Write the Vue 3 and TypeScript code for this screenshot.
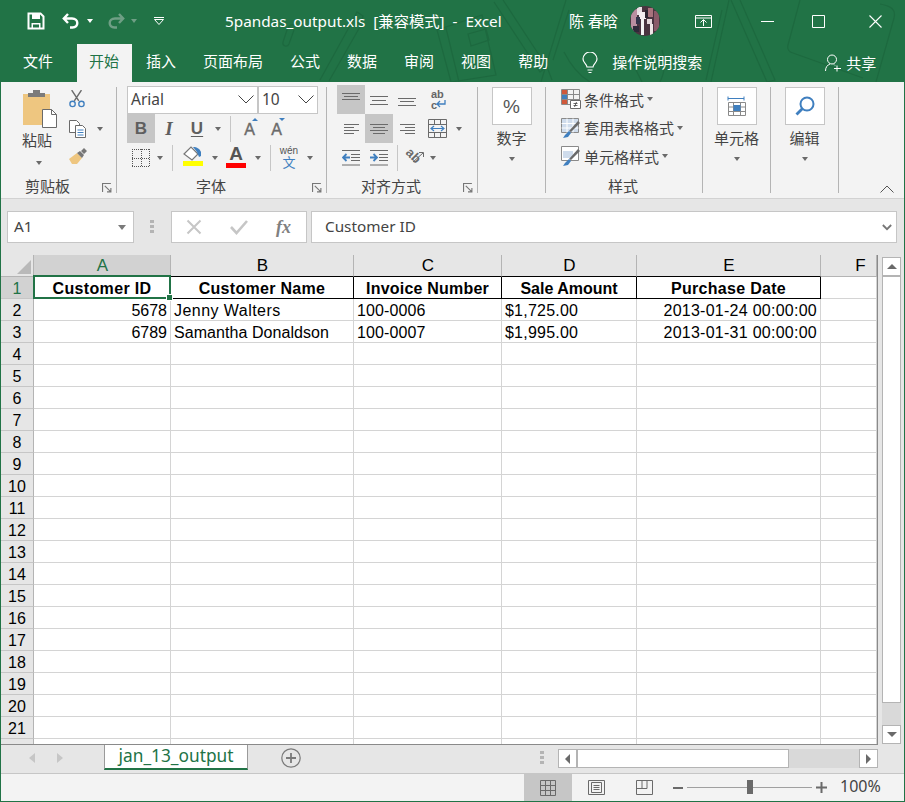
<template>
  <div class="window">
    <header class="titlebar">
      <svg class="doodles" width="905" height="82" viewBox="0 0 905 82" fill="none">
        <path d="M296 26c-4-3-7-1-9 4l-4 12c-1 4 4 6 6 2l5-14" />
        <path d="M320 80 353 20l8 5-32 56M353 20l4-8 6 4-2 9" />
        <path d="M437 30 482 15l14 60-45 7zM446 28l13 54M468 34l18-5 3 11-18 6z" />
        <path d="M503 0l44 67-7 5-46-70M547 67l5 13" />
        <path d="M553 60l16-50 M566 0l-25 82M590 82c-10-6-20-18-26-30" />
        <path d="M740 0l35 80-8 2-36-82M722 10l-16 70M729 0l-18 82" />
        <path d="M800 0l-12 45c-1 4 1 7 5 8l70 25M880 4c12 2 16 6 14 14l-18 64" />
        <path d="M620 60c6-2 10 0 14 6l8 16M660 82c4-8 6-20 2-32" />
      </svg>
      <div class="title-row">
        <div class="qat">
          <svg class="save" width="18" height="18" viewBox="0 0 18 18">
            <path d="M1.500 1.500h12l3 3v12h-15z" fill="none" stroke="#fff" stroke-width="2" />
            <path d="M5 2h8v5H5zM4.500 11h9v5h-9z" fill="#fff" />
            <path d="M6 12.500h6v3H6z" fill="#217346" />
          </svg>
          <svg class="undo" width="18" height="18" viewBox="0 0 18 18" fill="none" stroke="#fff" stroke-width="2.400">
            <path d="M6 2 1.800 6.500 6 11M2 6.500h8c7 0 7 9 .5 9H8" />
          </svg>
          <i class="qat-caret"></i>
          <svg class="redo" width="18" height="18" viewBox="0 0 18 18" fill="none" stroke="#6f9f85" stroke-width="2.400">
            <path d="M12 2l4.200 4.500L12 11M16 6.500H8c-7 0-7 9-.5 9H10" />
          </svg>
          <i class="qat-caret dim"></i>
          <svg class="customize" width="10" height="8" viewBox="0 0 10 8" fill="none" stroke="#fff">
            <path d="M0 .5h10M.5 2.500 5 7.500l4.500-5z" />
          </svg>
        </div>
        <div class="doc-title">5pandas_output.xls&nbsp; [兼容模式]&nbsp; -&nbsp; Excel</div>
        <div class="user">陈 春晗</div>
        <svg class="avatar" width="30" height="30" viewBox="0 0 30 30">
          <clipPath id="avatar-clip"><circle cx="15" cy="15" r="15" /></clipPath>
          <g clip-path="url(#avatar-clip)">
            <rect width="30" height="30" fill="#4a3440" />
            <rect x="1" y="3" width="6" height="22" fill="#b98ea0" />
            <rect x="7" y="1" width="5" height="8" fill="#e8dfe4" />
            <rect x="9" y="6" width="7" height="7" fill="#f3edf0" />
            <rect x="6" y="11" width="4" height="7" fill="#33334a" />
            <rect x="11" y="13" width="3" height="16" fill="#f4f4f4" />
            <rect x="15" y="4" width="4" height="8" fill="#2c2430" />
            <rect x="18" y="2" width="5" height="9" fill="#a8727c" />
            <rect x="17" y="13" width="5" height="5" fill="#e6d9dc" />
            <rect x="20" y="18" width="3" height="11" fill="#efe6e6" />
            <rect x="24" y="5" width="5" height="20" fill="#8a5a68" />
            <rect x="3" y="20" width="6" height="6" fill="#2e2a3a" />
          </g>
        </svg>
        <svg class="win-restore" width="17" height="13" viewBox="0 0 17 13" fill="none" stroke="#fff">
          <path d="M.5.500h16v12H.5zM.5 3h16" />
          <path d="M8.500 11V5M5.500 7.500l3-3 3 3" />
        </svg>
        <svg class="win-min" width="13" height="13" viewBox="0 0 13 13" stroke="#fff"><path d="M0 6.500h13" /></svg>
        <svg class="win-max" width="13" height="13" viewBox="0 0 13 13" fill="none" stroke="#fff"><path d="M.5.500h12v12H.5z" /></svg>
        <svg class="win-close" width="13" height="13" viewBox="0 0 13 13" stroke="#fff" stroke-width="1.100"><path d="M.5.500l12 12M12.500.500l-12 12" /></svg>
      </div>
      <nav class="tabs-row">
        <span v-for="tab in tabs" :key="tab" class="tab" :class="{ active: tab === '开始', file: tab === '文件' }">{{ tab }}</span>
        <svg class="bulb" width="16" height="22" viewBox="0 0 16 22" fill="none" stroke="#fff" stroke-width="1.200">
          <path d="M5 15c0-3-4-4-4-8a7 7 0 0 1 14 0c0 4-4 5-4 8zM5.500 18h5M6.500 20.500h3" />
        </svg>
        <span class="search">操作说明搜索</span>
        <svg class="person" width="16" height="18" viewBox="0 0 16 18" fill="none" stroke="#fff">
          <path d="M7 1a4 4 0 0 1 0 9 4 4 0 0 1 0-9zM.5 17c0-4 2-6 4.500-7M9 10.500l1 1M12 11.500v6M9 14.500h7" />
        </svg>
        <span class="share">共享</span>
      </nav>
    </header>

    <section class="ribbon">
      <div class="group clipboard">
        <div class="clip-body">
          <div class="paste">
            <svg width="34" height="38" viewBox="0 0 34 38">
              <path d="M0 4h27v31H0z" fill="#eec680" />
              <path d="M5 3h5V0h7v3h5v4H5z" fill="#7b7b7b" />
              <path d="M19.500 19.500h9l5 5v13h-14z" fill="#fff" stroke="#6a6a6a" />
              <path d="M28.500 19.500v5h5" fill="none" stroke="#6a6a6a" />
            </svg>
            <span class="big-label">粘贴</span>
            <i class="caret"></i>
          </div>
          <div class="clip-tools">
            <svg class="small-icon" width="16" height="18" viewBox="0 0 18 20" fill="none">
              <path d="M3 0l8 12M14 0 6 12" stroke="#6a6a6a" stroke-width="1.600" />
              <circle cx="4" cy="15.500" r="3" stroke="#3f7fbf" stroke-width="1.500" />
              <circle cx="14" cy="15.500" r="3" stroke="#3f7fbf" stroke-width="1.500" />
            </svg>
            <div class="copy-row">
              <svg width="18" height="18" viewBox="0 0 18 18" fill="#fff" stroke="#6a6a6a">
                <path d="M.5.500h7l3 3v9H.5z" />
                <path d="M6.500 5.500h7l3 3v9h-10z" />
                <path d="M8.500 10h6M8.500 12.500h6M8.500 15h6" stroke="#3f7fbf" />
              </svg>
              <i class="caret"></i>
            </div>
            <svg class="small-icon" width="18" height="16" viewBox="0 0 18 16">
              <path d="M0 11 8 5l5 5-5 6H3z" fill="#eec680" />
              <path d="M8 5l3-2 4 4-2 3zM12 3l3-3 3 3-3 3z" fill="#777" />
            </svg>
          </div>
        </div>
        <div class="group-label">
          <span class="clipboard-text">剪贴板</span>
          <svg class="launcher" width="10" height="10" viewBox="0 0 9 9" fill="none" stroke="#777"><path d="M.5 8V.5H8M2.500 2.500 8 8M8 4.500V8H4.500" /></svg>
        </div>
      </div>
      <i class="sep"></i>

      <div class="group font">
        <div class="row">
          <div class="combo font-name">Arial<svg width="16" height="9" viewBox="0 0 16 9" fill="none" stroke="#444"><path d="M.5.500 8 8 15.500.500" /></svg></div>
          <div class="combo font-size">10<svg width="16" height="9" viewBox="0 0 16 9" fill="none" stroke="#444"><path d="M.5.500 8 8 15.500.500" /></svg></div>
        </div>
        <div class="row row2">
          <span class="tool on glyph bold">B</span>
          <span class="tool glyph italic">I</span>
          <span class="tool glyph underline">U</span>
          <span class="tool-caret"><i class="caret"></i></span>
          <i class="tool-sep"></i>
          <span class="tool grow"><b>A</b><i class="up"></i></span>
          <span class="tool shrink"><b>A</b><i class="down"></i></span>
        </div>
        <div class="row row3">
          <span class="tool borders">
            <svg width="18" height="18" viewBox="0 0 18 18" fill="none" stroke="#555" stroke-dasharray="1 1"><path d="M0 .5h18M0 17.500h18M0 9.500h18M.5 0v18M17.500 0v18M9.500 0v18" /></svg>
          </span>
          <span class="tool-caret"><i class="caret"></i></span>
          <i class="tool-sep"></i>
          <span class="tool fill">
            <svg width="20" height="15" viewBox="0 0 20 15">
              <path d="M1 8 8 1l7 7-6 6z" fill="#fff" stroke="#777" stroke-width="1.200" />
              <path d="M10 1c4 0 7 2 8 5v4l-2 1-2-5z" fill="#3f7fbf" />
            </svg>
            <i class="swatch yellow"></i>
          </span>
          <span class="tool-caret"><i class="caret"></i></span>
          <span class="tool color">
            <b>A</b>
            <i class="swatch red"></i>
          </span>
          <span class="tool-caret"><i class="caret"></i></span>
          <i class="tool-sep"></i>
          <span class="tool phonetic"><small>wén</small><em>文</em></span>
          <span class="tool-caret"><i class="caret"></i></span>
        </div>
        <div class="group-label">
          <span class="font-text">字体</span>
          <svg class="launcher" width="10" height="10" viewBox="0 0 9 9" fill="none" stroke="#777"><path d="M.5 8V.5H8M2.500 2.500 8 8M8 4.500V8H4.500" /></svg>
        </div>
      </div>
      <i class="sep"></i>

      <div class="group align">
        <div class="row">
          <span class="tool on"><svg width="18" height="14" viewBox="0 0 18 14" stroke="#6a6a6a"><path d="M0 .5h18M2 3.500h14M0 6.500h18" /></svg></span>
          <span class="tool"><svg width="18" height="14" viewBox="0 0 18 14" stroke="#6a6a6a"><path d="M0 3.500h18M2 7.500h14M0 11.500h18" /></svg></span>
          <span class="tool"><svg width="18" height="14" viewBox="0 0 18 14" stroke="#6a6a6a"><path d="M0 5.500h18M2 8.500h14M0 12.500h18" /></svg></span>
          <span class="tool wrap"><small class="wrap-ab">ab</small><small class="wrap-c">c</small><svg width="10" height="8" viewBox="0 0 10 8" fill="none" stroke="#3f7fbf" stroke-width="1.300"><path d="M9 0v4H1M4 1 1 4l3 3" /></svg></span>
        </div>
        <div class="row">
          <span class="tool"><svg width="15" height="12" viewBox="0 0 15 12" stroke="#6a6a6a"><path d="M0 1.500h15M0 4.500h10M0 7.500h15M0 10.500h10" /></svg></span>
          <span class="tool on"><svg width="18" height="12" viewBox="0 0 18 12" stroke="#6a6a6a"><path d="M0 1.500h18M3 4.500h12M0 7.500h18M3 10.500h12" /></svg></span>
          <span class="tool"><svg width="15" height="12" viewBox="0 0 15 12" stroke="#6a6a6a"><path d="M0 1.500h15M5 4.500h10M0 7.500h15M5 10.500h10" /></svg></span>
          <span class="tool merge">
            <svg width="19" height="19" viewBox="0 0 19 19" fill="none">
              <path d="M.5.500h18v18H.5zM.5 5.500h18M.5 13.500h18M6.500.5v5M12.500.5v5M6.500 13.500v5M12.500 13.500v5" stroke="#6a6a6a" />
              <path d="M3 9.500h13M6 7 3 9.500 6 12M13 7l3 2.500-3 2.500" stroke="#3f7fbf" stroke-width="1.200" />
            </svg>
          </span>
          <span class="tool-caret merge-caret"><i class="caret"></i></span>
        </div>
        <div class="row">
          <span class="tool"><svg width="18" height="16" viewBox="0 0 18 16" fill="none"><path d="M0 .5h18M9 4.500h9M9 7.500h9M9 10.500h9M0 15h18" stroke="#6a6a6a" /><path d="M1 7.500h7M4.500 4 1 7.500 4.500 11" stroke="#3f7fbf" stroke-width="1.800" /></svg></span>
          <span class="tool"><svg width="18" height="16" viewBox="0 0 18 16" fill="none"><path d="M0 .5h18M9 4.500h9M9 7.500h9M9 10.500h9M0 15h18" stroke="#6a6a6a" /><path d="M0 7.500h7M3.500 4 7 7.500 3.500 11" stroke="#3f7fbf" stroke-width="1.800" /></svg></span>
          <i class="tool-sep orient-sep"></i>
          <span class="orient"><em>ab</em><svg width="12" height="12" viewBox="0 0 12 12" fill="none" stroke="#6a6a6a"><path d="M0 11 10 2M6 1.500h4.500V6" /></svg></span>
          <span class="tool-caret orient-caret"><i class="caret"></i></span>
        </div>
        <div class="group-label">
          <span class="align-text">对齐方式</span>
          <svg class="launcher" width="10" height="10" viewBox="0 0 9 9" fill="none" stroke="#777"><path d="M.5 8V.5H8M2.500 2.500 8 8M8 4.500V8H4.500" /></svg>
        </div>
      </div>
      <i class="sep"></i>

      <div class="group collapsed">
        <div class="big-box percent">%</div>
        <span class="big-label">数字</span>
        <i class="caret"></i>
      </div>
      <i class="sep"></i>

      <div class="group styles">
        <div class="style-row">
          <svg width="20" height="20" viewBox="0 0 20 20" fill="none">
            <path d="M.5.500h18v15H.5zM.5 5.500h18M.5 10.500h18M6.500.5v15M12.500.5v15" stroke="#8a8a8a" />
            <path d="M1 1h5v4H1z" fill="#d0583a" /><path d="M1 6h5v4H1z" fill="#3f7fbf" /><path d="M1 11h5v4H1z" fill="#d0583a" />
            <path d="M9.500 11.500h10v8h-10z" fill="#fff" stroke="#6a6a6a" />
            <path d="M12.500 14.500h4M12.500 16.500h4M15.500 13l-2 5" stroke="#444" stroke-width=".8" />
          </svg>
          <span>条件格式</span><i class="caret"></i>
        </div>
        <div class="style-row">
          <svg width="20" height="20" viewBox="0 0 20 20" fill="none">
            <path d="M.5.500h17v14H.5z" fill="#cfdcec" stroke="#8a8a8a" />
            <path d="M.5 5.500h17M.5 10h17M6 .5v14M12 .5v14" stroke="#fff" />
            <path d="M19 5 10 14l-2-1 9-10z" fill="#6a6a6a" />
            <path d="M8 13l2 2-3 4-5 1 2-3z" fill="#3f7fbf" />
          </svg>
          <span>套用表格格式</span><i class="caret"></i>
        </div>
        <div class="style-row">
          <svg width="20" height="20" viewBox="0 0 20 20" fill="none">
            <path d="M.5.500h17v14H.5z" fill="#fff" stroke="#8a8a8a" />
            <path d="M2 5h10v7H2z" fill="#cfdcec" />
            <path d="M19 5 10 14l-2-1 9-10z" fill="#6a6a6a" />
            <path d="M8 13l2 2-3 4-5 1 2-3z" fill="#3f7fbf" />
          </svg>
          <span>单元格样式</span><i class="caret"></i>
        </div>
        <div class="group-label"><span class="styles-text">样式</span></div>
      </div>
      <i class="sep"></i>

      <div class="group collapsed">
        <div class="big-box">
          <svg width="20" height="23" viewBox="0 0 20 23" fill="none">
            <path d="M1 3.500h16M1 1.500v4M17 1.500v4M1 3.500h3M14 3.500h3" stroke="#3f7fbf" />
            <path d="M1.500 7.500h17v13h-17zM1.500 12h17M1.500 16.500h17M6.500 7.500v13M13.500 7.500v13" stroke="#8a8a8a" />
            <path d="M6.500 10h7v6h-7z" fill="#3f7fbf" />
          </svg>
        </div>
        <span class="big-label">单元格</span>
        <i class="caret"></i>
      </div>
      <i class="sep"></i>

      <div class="group collapsed">
        <div class="big-box">
          <svg width="20" height="20" viewBox="0 0 20 20" fill="none" stroke="#3f7fbf" stroke-width="2">
            <circle cx="12" cy="8" r="6.500" />
            <path d="M7.500 12.500 1.500 18.500" stroke-width="2.800" />
          </svg>
        </div>
        <span class="big-label">编辑</span>
        <i class="caret"></i>
      </div>
      <i class="sep"></i>

      <svg class="collapse" width="14" height="8" viewBox="0 0 14 8" fill="none" stroke="#555"><path d="M.5 7.500 7 1l6.500 6.500" /></svg>
    </section>

    <section class="formula-bar">
      <div class="name-box"><span>A1</span><i class="caret"></i></div>
      <div class="dots"><i></i><i></i><i></i></div>
      <div class="fx-box">
        <svg width="16" height="16" viewBox="0 0 16 16" stroke="#c6c6c6" stroke-width="2"><path d="M1.500 1.500l13 13M14.500 1.500l-13 13" /></svg>
        <svg width="18" height="16" viewBox="0 0 18 16" fill="none" stroke="#c6c6c6" stroke-width="2.600"><path d="M1 8l5.500 6L17 2" /></svg>
        <em>fx</em>
      </div>
      <div class="formula-input">
        <span>Customer ID</span>
        <svg width="10" height="7" viewBox="0 0 12 8" fill="none" stroke="#777" stroke-width="2.200"><path d="M1 1l5 5 5-5" /></svg>
      </div>
    </section>

    <section class="sheet">
      <div class="grid">
        <div class="corner"><i></i></div>
        <div
          v-for="(col, c) in columns"
          :key="col"
          class="col-head"
          :class="{ selected: c === 0, boxed: c < 5, last: c === 5 }"
        >{{ col }}</div>
        <template v-for="r in rowNumbers" :key="r">
          <div class="row-head" :class="{ selected: r === 1 }">{{ r < 22 ? r : '' }}</div>
          <div
            v-for="(col, c) in columns"
            :key="col"
            class="cell"
            :class="[rows[r - 1]?.aligns[c], { head: r === 1 && c < 5 }]"
            :style="{ letterSpacing: (rows[r - 1]?.tracking[c] ?? 0) + 'px' }"
          >
            {{ rows[r - 1]?.values[c] ?? '' }}
            <template v-if="r === 1 && c === 0">
              <i class="active-cell"></i>
              <i class="handle"></i>
            </template>
          </div>
        </template>
      </div>
      <div class="vscroll">
        <div class="sb-btn"><i class="arrow-up"></i></div>
        <div class="vthumb"></div>
        <div class="sb-btn"><i class="arrow-down"></i></div>
      </div>
    </section>

    <section class="sheet-bar">
      <div class="sheet-nav"><i class="nav-left"></i><i class="nav-right"></i></div>
      <div class="sheet-tab">jan_13_output</div>
      <svg class="add-sheet" width="20" height="20" viewBox="0 0 20 20" fill="none" stroke="#7a7a7a">
        <circle cx="10" cy="10" r="9.200" stroke-width="1.200" />
        <path d="M10 5v10M5 10h10" stroke-width="1.800" />
      </svg>
      <div class="dots sheet-dots"><i></i><i></i><i></i></div>
      <div class="hscroll">
        <div class="sb-btn h"><i class="arrow-left"></i></div>
        <div class="hthumb"></div>
        <div class="sb-btn h"><i class="arrow-right"></i></div>
      </div>
    </section>

    <footer class="status-bar">
      <span class="view on">
        <svg width="16" height="16" viewBox="0 0 16 16" fill="none" stroke="#6a6a6a"><path d="M.5.500h15v15H.5zM.5 5.500h15M.5 10.500h15M5.500.5v15M10.500.5v15" /></svg>
      </span>
      <span class="view">
        <svg width="17" height="15" viewBox="0 0 17 15" fill="none" stroke="#6a6a6a"><path d="M.5.500h16v14H.5zM3.500 2.500h10v10h-10zM5.500 5.500h6M5.500 7.500h6M5.500 9.500h6" /></svg>
      </span>
      <span class="view">
        <svg width="17" height="15" viewBox="0 0 17 15" fill="none" stroke="#6a6a6a"><path d="M.5.500h16v14H.5zM6 .5v8H.5M6 8.500h5V.5" /></svg>
      </span>
      <i class="zoom-minus"></i>
      <div class="zoom-track"><i></i></div>
      <svg class="zoom-plus" width="11" height="11" viewBox="0 0 11 11" stroke="#6a6a6a" stroke-width="2"><path d="M5.500 0v11M0 5.500h11" /></svg>
      <span class="zoom-value">100%</span>
    </footer>
  </div>
</template>

<script setup lang="ts">
type Align = '' | 'left' | 'right' | 'center'

interface Row {
  values: string[]
  aligns: Align[]
  tracking: number[]
}

const tabs = ['文件', '开始', '插入', '页面布局', '公式', '数据', '审阅', '视图', '帮助']
const columns = ['A', 'B', 'C', 'D', 'E', 'F']
const rowNumbers = Array.from({ length: 22 }, (_, i) => i + 1)

const rows: Row[] = [
  {
    values: ['Customer ID', 'Customer Name', 'Invoice Number', 'Sale Amount', 'Purchase Date', ''],
    aligns: ['center', 'center', 'center', 'center', 'center', ''],
    tracking: [0.35, 0.3, 0.2, 0, 0.3, 0],
  },
  {
    values: ['5678', 'Jenny Walters', '100-0006', '$1,725.00', '2013-01-24 00:00:00', ''],
    aligns: ['right', 'left', 'left', 'left', 'right', ''],
    tracking: [0, 0.45, 0.12, 0.22, 0.26, 0],
  },
  {
    values: ['6789', 'Samantha Donaldson', '100-0007', '$1,995.00', '2013-01-31 00:00:00', ''],
    aligns: ['right', 'left', 'left', 'left', 'right', ''],
    tracking: [0, 0.06, 0.12, 0.22, 0.26, 0],
  },
]
</script>

<style>
html,
body {
  margin: 0;
  background: #fff;
}
</style>

<style scoped>
.window {
  width: 905px;
  height: 802px;
  box-sizing: border-box;
  border: 1px solid #217346;
  border-top: 0;
  display: flex;
  flex-direction: column;
  overflow: hidden;
  background: #e6e6e6;
  font-family: "Noto Sans", "Noto Sans CJK SC", sans-serif;
  color: #444;
}
i {
  display: block;
  font-style: normal;
}

/* title bar */
.titlebar {
  height: 82px;
  flex: none;
  background: #217346;
  position: relative;
  color: #fff;
}
.doodles {
  position: absolute;
  left: -1px;
  top: 0;
  stroke: #1d693f;
  stroke-width: 1.200;
}
.title-row {
  height: 42px;
  margin-bottom: 2px;
  display: flex;
  align-items: center;
  position: relative;
}
.qat {
  width: 224px;
  flex: none;
  display: flex;
  align-items: center;
  padding-left: 26px;
  box-sizing: border-box;
}
.undo { margin-left: 17px; }
.qat-caret {
  width: 0;
  height: 0;
  margin-left: 7px;
  border: 3.500px solid transparent;
  border-top: 4px solid #fff;
  border-bottom: 0;
}
.qat-caret.dim { margin-left: 6px; border-top-color: #6f9f85; }
.redo { margin-left: 14px; }
.customize { margin-left: 17px; }
.doc-title {
  width: 344px;
  flex: none;
  font-size: 15.300px;
  white-space: nowrap;
  margin-top: -2px;
}
.user {
  width: 49px;
  flex: none;
  font-size: 15px;
  white-space: nowrap;
  margin-top: -2px;
}
.avatar { margin-left: 12px; margin-top: -1px; flex: none; }
.win-restore { margin-left: 35px; flex: none; }
.win-min { margin-left: 49px; flex: none; }
.win-max { margin-left: 38px; flex: none; }
.win-close { margin-left: 44px; flex: none; }
.tabs-row {
  height: 38px;
  display: flex;
  align-items: center;
  gap: 3px;
  padding-left: 10px;
  position: relative;
}
.tab {
  height: 38px;
  line-height: 35px;
  padding: 0 12px;
  white-space: nowrap;
  font-size: 15px;
}
.tab.file { margin-right: 9px; }
.tab.active {
  background: #f3f3f3;
  color: #217346;
  padding-right: 13px;
  margin-right: -1px;
}
.bulb { margin-left: 19px; flex: none; }
.search { margin-left: 11px; font-size: 15px; white-space: nowrap; margin-top: -4px; }
.person { margin-left: 120px; flex: none; }
.share { margin-left: 2px; font-size: 15px; margin-top: -2px; }

/* ribbon */
.ribbon {
  height: 117px;
  flex: none;
  box-sizing: border-box;
  background: #f3f3f3;
  border-bottom: 1px solid #d2d2d2;
  display: flex;
  padding-top: 3px;
  position: relative;
}
.group {
  flex: none;
  display: flex;
  flex-direction: column;
  position: relative;
}
.sep {
  width: 1px;
  height: 106px;
  margin-top: 2px;
  background: #b4b4b4;
  flex: none;
}
.row {
  height: 29px;
  display: flex;
  align-items: center;
}
.group-label {
  height: 22px;
  margin-top: 3px;
  display: flex;
  align-items: center;
  font-size: 15px;
  line-height: 22px;
  white-space: nowrap;
  position: relative;
}
.launcher {
  position: absolute;
  top: 8px;
}
.caret {
  width: 0;
  height: 0;
  border: 3.500px solid transparent;
  border-top: 4px solid #6a6a6a;
  border-bottom: 0;
  flex: none;
}
.tool {
  width: 28px;
  height: 29px;
  flex: none;
  display: flex;
  align-items: center;
  justify-content: center;
  color: #5f5f5f;
  position: relative;
}
.tool.on { background: #c6c6c6; }
.tool-caret {
  width: 14px;
  flex: none;
  display: flex;
  justify-content: center;
}
.tool-sep {
  width: 1px;
  height: 26px;
  margin: 0 5px;
  background: #c6c6c6;
  flex: none;
}

/* clipboard */
.clipboard { width: 115px; }
.clip-body {
  height: 87px;
  display: flex;
}
.paste {
  width: 60px;
  margin-left: 22px;
  margin-top: 5px;
  display: flex;
  flex-direction: column;
  align-items: flex-start;
}
.big-label {
  font-size: 15px;
  line-height: 22px;
  color: #444;
  white-space: nowrap;
}
.paste .big-label { margin-top: 1px; margin-left: -1px; }
.paste .caret { margin-left: 13px; margin-top: 10px; }
.clip-tools {
  display: flex;
  flex-direction: column;
  align-items: flex-start;
  margin-left: -15px;
  margin-top: 5px;
}
.small-icon { margin-left: 1px; }
.copy-row {
  display: flex;
  align-items: center;
  gap: 10px;
  margin-top: 12px;
  margin-bottom: 10px;
  margin-left: 1px;
}
.clipboard-text { margin-left: 24px; }
.clipboard .launcher { left: 101px; }

/* font */
.font { width: 209px; padding-left: 10px; box-sizing: border-box; }
.combo {
  height: 28px;
  box-sizing: border-box;
  background: #fff;
  border: 1px solid #c6c6c6;
  display: flex;
  align-items: center;
  justify-content: space-between;
  padding: 0 3px 2px 3px;
  font-size: 15.500px;
  color: #444;
}
.font-name { width: 131px; font-family: "Noto Sans", sans-serif; }
.font-size { width: 60px; margin-left: 0; }
.combo svg { margin-top: 2px; }
.glyph {
  font-family: "Liberation Sans", sans-serif;
  font-size: 17px;
}
.bold { font-weight: 700; }
.italic { font-style: italic; font-family: "Liberation Serif", serif; font-weight: 700; font-size: 19px; }
.underline { font-weight: 700; text-decoration: underline; text-underline-offset: 2px; }
.grow b,
.shrink b {
  font-family: "Liberation Sans", sans-serif;
  font-size: 16px;
  font-weight: 400;
  color: #6a6a6a;
  -webkit-text-stroke: .4px #6a6a6a;
  margin-top: 3px;
}
.grow,
.shrink { width: 27px; }
.up,
.down {
  position: absolute;
  top: 4px;
  right: 5px;
  width: 0;
  height: 0;
  border: 3px solid transparent;
}
.up { border-bottom: 3px solid #3f7fbf; border-top: 0; }
.down { border-top: 3px solid #3f7fbf; border-bottom: 0; }
.borders { width: 25px; margin-left: 1px; }
.fill {
  width: 30px;
  flex-direction: column;
  justify-content: flex-start;
  padding-top: 3px;
  box-sizing: border-box;
}
.swatch {
  width: 20px;
  height: 5px;
}
.yellow { background: #ff0; }
.red { background: #f00; }
.color {
  flex-direction: column;
  justify-content: flex-start;
  width: 30px;
  margin-left: -1px;
  padding-top: 2px;
  box-sizing: border-box;
}
.color b {
  font-family: "Liberation Sans", sans-serif;
  font-size: 19px;
  line-height: 18px;
  color: #555;
  font-weight: 700;
}
.phonetic {
  flex-direction: column;
  margin-left: -1px;
}
.phonetic small {
  font-size: 10px;
  line-height: 11px;
  color: #555;
  font-family: "Liberation Sans", sans-serif;
}
.phonetic em {
  font-family: "Liberation Sans", "Noto Sans CJK SC", sans-serif;
  font-style: normal;
  color: #3f7fbf;
  font-size: 13px;
  line-height: 14px;
}
.font-text { margin-left: 69px; }
.font .launcher { left: 185px; }

/* alignment */
.align { width: 150px; padding-left: 10px; box-sizing: border-box; }
.wrap {
  flex-direction: column;
  font-family: "Liberation Sans", sans-serif;
  align-items: flex-start;
  padding-left: 10px;
  box-sizing: border-box;
}
.wrap small {
  font-size: 11px;
  line-height: 11px;
  font-weight: 700;
  color: #666;
}
.wrap svg {
  position: absolute;
  right: 3px;
  bottom: 6px;
}
.merge { width: 32px; }
.merge-caret { width: 12px; }
.orient-sep { margin: 0 8px 0 4px; }
.orient {
  width: 18px;
  flex: none;
  position: relative;
  height: 20px;
}
.orient em {
  position: absolute;
  left: 0;
  top: 0;
  font-family: "Liberation Sans", sans-serif;
  font-style: normal;
  font-weight: 700;
  font-size: 13px;
  color: #6a6a6a;
  transform: rotate(45deg);
}
.orient svg { position: absolute; right: -1px; top: 3px; }
.orient-caret { margin-left: 2px; }
.align-text { margin-left: 24px; }
.align .launcher { left: 126px; }

/* collapsed groups */
.collapsed {
  width: 67px;
  align-items: center;
  padding-top: 2px;
  box-sizing: border-box;
}
.big-box {
  width: 40px;
  height: 38px;
  box-sizing: border-box;
  background: #fff;
  border: 1px solid #c6c6c6;
  display: flex;
  align-items: center;
  justify-content: center;
}
.percent {
  font-size: 19px;
  color: #555;
  font-family: "Liberation Sans", sans-serif;
  padding-top: 2px;
}
.collapsed .big-label { margin-top: 2px; }
.collapsed .caret { margin-top: 8px; }

/* styles */
.styles { width: 156px; padding: 0 0 0 15px; box-sizing: border-box; }
.style-row {
  height: 28.500px;
  display: flex;
  align-items: center;
  font-size: 15px;
  white-space: nowrap;
}
.style-row svg { margin-right: 3px; flex: none; }
.style-row .caret { margin-left: 3px; border-width: 3px; border-top-width: 4px; border-bottom: 0; }
.styles .group-label { margin-top: 4.500px; }
.styles-text { margin-left: 47px; }
.collapse {
  position: absolute;
  left: 879px;
  top: 103px;
}

/* formula bar */
.formula-bar {
  height: 56px;
  flex: none;
  display: flex;
  align-items: flex-start;
  padding: 12px 6px 0;
  box-sizing: border-box;
  background: #e6e6e6;
}
.name-box,
.fx-box,
.formula-input {
  height: 32px;
  box-sizing: border-box;
  background: #fff;
  border: 1px solid #c6c6c6;
  display: flex;
  align-items: center;
  flex: none;
  font-size: 15.300px;
  color: #444;
}
.name-box span,
.formula-input span { margin-top: -2px; }
.name-box {
  width: 127px;
  padding: 0 7px 0 6px;
  justify-content: space-between;
}
.name-box .caret {
  border-width: 4px;
  border-top-width: 5px;
  border-bottom: 0;
  border-top-color: #7a7a7a;
}
.dots {
  flex: none;
  display: flex;
  flex-direction: column;
  gap: 2px;
}
.dots i {
  width: 4px;
  height: 3px;
  background: #b4b4b4;
}
.formula-bar .dots {
  margin: 9px 17px 0 16px;
}
.fx-box {
  width: 136px;
  padding-left: 14px;
  gap: 28px;
}
.fx-box em {
  font-family: "Liberation Serif", serif;
  font-size: 18px;
  font-weight: 700;
  color: #808080;
}
.formula-input {
  width: 586px;
  margin-left: 4px;
  padding: 0 4px 0 13px;
  justify-content: space-between;
}

/* grid */
.sheet {
  height: 490px;
  flex: none;
  display: flex;
}
.grid {
  width: 877px;
  height: 490px;
  box-sizing: border-box;
  flex: none;
  display: grid;
  grid-template-columns: 33px 137px 183px 148px 135px 184px 56px;
  grid-template-rows: 22px repeat(22, 22px);
  overflow: hidden;
  border-right: 1px solid #8a8a8a;
  border-bottom: 1px solid #8a8a8a;
  background: #fff;
  font-family: "Liberation Sans", sans-serif;
  font-size: 16px;
  color: #000;
}
.corner {
  background: #e6e6e6;
  border-right: 1px solid #b4b4b4;
  border-bottom: 1px solid #b4b4b4;
  box-sizing: border-box;
  position: relative;
}
.corner i {
  position: absolute;
  right: 2px;
  bottom: 2px;
  width: 0;
  height: 0;
  border-left: 14px solid transparent;
  border-bottom: 14px solid #b9b9b9;
}
.col-head {
  background: #e6e6e6;
  border-right: 1px solid #b4b4b4;
  border-bottom: 1px solid #b4b4b4;
  box-sizing: border-box;
  text-align: center;
  font-size: 17px;
  line-height: 22px;
  padding-left: 1px;
}
.col-head.boxed { border-bottom-color: #000; }
.col-head.last { padding-left: 24px; white-space: nowrap; }
.col-head.selected {
  background: #d2d2d2;
  color: #217346;
}
.row-head {
  background: #e6e6e6;
  border-right: 1px solid #b4b4b4;
  border-bottom: 1px solid #c6c6c6;
  box-sizing: border-box;
  text-align: center;
  line-height: 23px;
}
.row-head.selected {
  background: #d2d2d2;
  color: #217346;
}
.cell {
  border-right: 1px solid #d4d4d4;
  border-bottom: 1px solid #d4d4d4;
  box-sizing: border-box;
  padding: 0 3px;
  line-height: 23px;
  white-space: nowrap;
  position: relative;
}
.cell.left { text-align: left; }
.cell.right { text-align: right; }
.cell.center { text-align: center; }
.cell.head {
  font-weight: 700;
  border-right-color: #000;
  border-bottom-color: #000;
}
.active-cell {
  position: absolute;
  left: -1px;
  top: -2px;
  right: -1px;
  bottom: -1px;
  border: 2px solid #217346;
}
.handle {
  position: absolute;
  right: -3px;
  bottom: -3px;
  width: 5px;
  height: 5px;
  background: #217346;
  border: 1px solid #fff;
  z-index: 1;
}
.vscroll {
  width: 19px;
  height: 487px;
  margin: 2px 0 0 4px;
  flex: none;
  background: #d9d9d9;
  display: flex;
  flex-direction: column;
}
.sb-btn {
  width: 19px;
  height: 19px;
  flex: none;
  box-sizing: border-box;
  background: #fff;
  border: 1px solid #b4b4b4;
  display: flex;
  align-items: center;
  justify-content: center;
}
.vthumb {
  height: 427px;
  flex: none;
  margin-bottom: 22px;
  box-sizing: border-box;
  background: #fff;
  border: 1px solid #b4b4b4;
}
.arrow-up,
.arrow-down {
  width: 0;
  height: 0;
  border: 5px solid transparent;
}
.arrow-up { border-bottom: 5px solid #6a6a6a; border-top: 0; }
.arrow-down { border-top: 5px solid #6a6a6a; border-bottom: 0; }
.arrow-left,
.arrow-right {
  width: 0;
  height: 0;
  border: 5px solid transparent;
}
.arrow-left { border-right: 5px solid #6a6a6a; border-left: 0; }
.arrow-right { border-left: 5px solid #6a6a6a; border-right: 0; }

/* sheet tabs */
.sheet-bar {
  height: 29px;
  flex: none;
  box-sizing: border-box;
  background: #e6e6e6;
  border-bottom: 1px solid #c6c6c6;
  display: flex;
  align-items: flex-start;
}
.sheet-nav {
  width: 103px;
  flex: none;
  display: flex;
  gap: 22px;
  padding: 8px 0 0 28px;
  box-sizing: border-box;
}
.nav-left,
.nav-right {
  width: 0;
  height: 0;
  border: 5px solid transparent;
}
.nav-left { border-right: 6px solid #c6c6c6; border-left: 0; }
.nav-right { border-left: 6px solid #c6c6c6; border-right: 0; }
.sheet-tab {
  width: 144px;
  height: 25px;
  flex: none;
  box-sizing: border-box;
  background: #fff;
  border-left: 1px solid #9a9a9a;
  border-right: 1px solid #9a9a9a;
  border-bottom: 2px solid #217346;
  color: #217346;
  font-size: 17.300px;
  line-height: 21px;
  text-align: center;
  white-space: nowrap;
}
.add-sheet {
  margin: 3px 0 0 33px;
  flex: none;
}
.sheet-bar .sheet-dots {
  margin: 6px 0 0 239px;
  gap: 2px;
}
.hscroll {
  width: 320px;
  height: 19px;
  margin: 4px 0 0 14px;
  flex: none;
  background: #d9d9d9;
  display: flex;
}
.sb-btn.h { width: 19px; }
.hthumb {
  width: 212px;
  margin-right: 70px;
  flex: none;
  box-sizing: border-box;
  background: #fff;
  border: 1px solid #b4b4b4;
}

/* status bar */
.status-bar {
  flex: 1;
  background: #f3f3f3;
  display: flex;
  align-items: center;
  padding-left: 523px;
}
.view {
  width: 48px;
  align-self: stretch;
  flex: none;
  display: flex;
  align-items: center;
  justify-content: center;
}
.view.on { background: #c6c6c6; }
.zoom-minus {
  width: 10px;
  height: 2px;
  margin-left: 5px;
  background: #6a6a6a;
  flex: none;
}
.zoom-track {
  width: 125px;
  height: 1px;
  margin-left: 4px;
  background: #a0a0a0;
  flex: none;
  position: relative;
}
.zoom-track i {
  position: absolute;
  left: 60px;
  top: -7px;
  width: 6px;
  height: 14px;
  background: #6a6a6a;
}
.zoom-plus { margin-left: 4px; flex: none; }
.zoom-value {
  margin-left: 13px;
  margin-top: -3px;
  font-size: 16px;
  color: #444;
}
</style>
